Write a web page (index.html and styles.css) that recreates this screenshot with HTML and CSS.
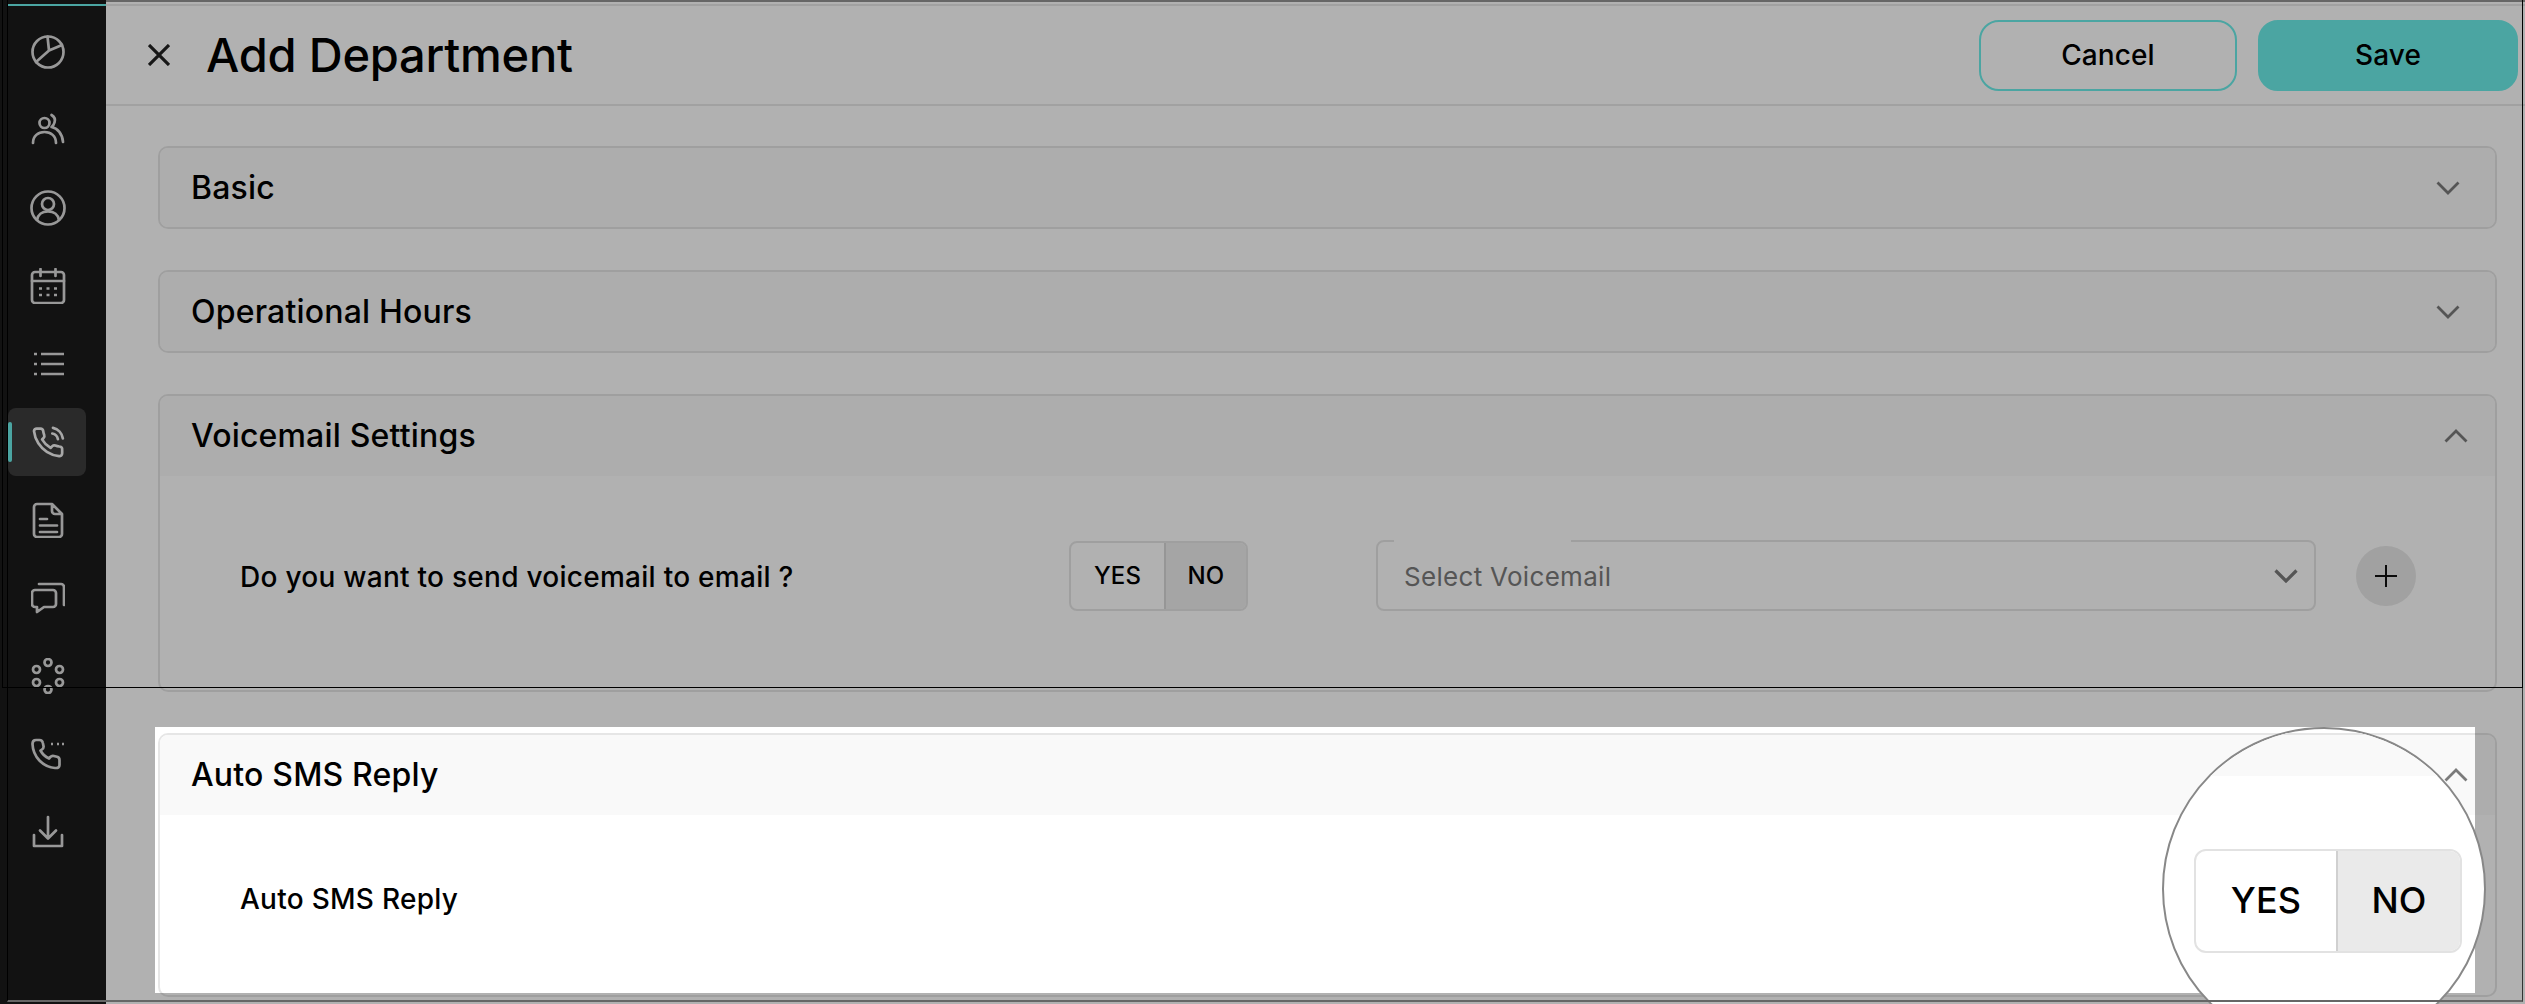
FILE: index.html
```html
<!DOCTYPE html>
<html lang="en">
<head>
<meta charset="utf-8">
<title>Add Department</title>
<link rel="stylesheet" href="styles.css">
</head>
<body>
<div class="app">
  <nav class="sidebar">
    <div class="side-accent"></div>
    <a class="nav-item"><svg class="ico" viewBox="0 0 34 34"><circle cx="17" cy="17" r="15.500"/><path d="M16.500 1.500L18 15.500 31 10M18 15.500L5 27"/></svg></a>
    <a class="nav-item"><svg class="ico" viewBox="0 0 34 34"><circle cx="13.500" cy="10" r="5"/><path d="M2 30c0-7 5-11 11.500-11S25 23 25 30M20.500 2c2.500 1.500 4 4.500 3 7.500-.5 2-1.500 3.500-3 4.500 6 1 11 7 11.500 15"/></svg></a>
    <a class="nav-item"><svg class="ico ico-lg" viewBox="0 0 36 36"><circle cx="18" cy="18" r="16.500"/><circle cx="18" cy="14" r="6"/><path d="M7 30c1-5.500 5-8.500 11-8.500S28 24.500 29 30"/></svg></a>
    <a class="nav-item"><svg class="ico ico-lg" viewBox="0 0 36 36"><rect x="2" y="4" width="32" height="31" rx="3"/><path d="M2 13h32M10.500 1v7M25.500 1v7"/><path class="dots" d="M9 20.500h3M16.500 20.500h3M24 20.500h3M9 27h3M16.500 27h3M24 27h3"/></svg></a>
    <a class="nav-item"><svg class="ico" viewBox="0 0 34 34"><path class="dots" d="M10 7h23M10 17h23M10 27h23M3 7h3M3 17h3M3 27h3"/></svg></a>
    <a class="nav-item nav-active"><span class="nav-mark"></span><svg class="ico ico-call" viewBox="0 0 24 24"><path d="M22 17.500v2.500a2 2 0 0 1-2.180 2 19.790 19.790 0 0 1-8.630-3.070 19.500 19.500 0 0 1-6-6 19.790 19.790 0 0 1-3.070-8.670A2 2 0 0 1 4.110 2.500h2.500a2 2 0 0 1 2 1.720c.127.960.361 1.903.700 2.810a2 2 0 0 1-.450 2.110L7.800 10.200a16 16 0 0 0 6 6l1.270-1.270a2 2 0 0 1 2.110-.450c.907.339 1.850.573 2.810.700A2 2 0 0 1 22 17.500zM15 6a5 5 0 0 1 4 4M15.500 2a9 9 0 0 1 7 7.500"/></svg></a>
    <a class="nav-item"><svg class="ico ico-lg" viewBox="0 0 36 36"><path d="M22 2H7a3 3 0 0 0-3 3v27a3 3 0 0 0 3 3h22a3 3 0 0 0 3-3V12L22 2zM22 2v7a3 3 0 0 0 3 3h7M10 17h7M10 23.500h17M10 30h17"/></svg></a>
    <a class="nav-item"><svg class="ico" viewBox="0 0 34 34"><path d="M4 9h18a3 3 0 0 1 3 3v11a3 3 0 0 1-3 3H13l-7 5v-5H4a3 3 0 0 1-3-3V12a3 3 0 0 1 3-3zM8 3h22a3 3 0 0 1 3 3v18"/></svg></a>
    <a class="nav-item"><svg class="ico ico-lg" viewBox="0 0 36 36"><circle cx="18" cy="4.500" r="3.500"/><circle cx="6.500" cy="11.500" r="3.500"/><circle cx="29.500" cy="11.500" r="3.500"/><circle cx="6.500" cy="24.500" r="3.500"/><circle cx="29.500" cy="24.500" r="3.500"/><circle cx="18" cy="31.500" r="3.500"/></svg></a>
    <a class="nav-item"><svg class="ico" viewBox="0 0 34 34"><path d="M24 31C12 30 2 20 1.500 7c0-2.500 1.500-4 3.500-4h3.500c1.800 0 3 1 3.300 2.700l.7 3.300c.3 1.500-.3 2.700-1.500 3.500l-1.500 1c2 3.800 4.700 6.300 8.500 8l1.300-1.500c1-1 2.200-1.300 3.500-1l3.200.8c1.700.4 2.500 1.500 2.500 3.200V28c0 2-1.500 3.200-4 3z"/><path class="dots" d="M20 7h2M26 7h2M31 7h2"/></svg></a>
    <a class="nav-item"><svg class="ico" viewBox="0 0 34 34"><path d="M17 2v21M9 15.500l8 8 8-8M3 20v11h28V20"/></svg></a>
  </nav>

  <main class="main">
    <header class="topbar">
      <svg class="close" viewBox="0 0 22 22"><path d="M1 1l20 20M21 1L1 21"/></svg>
      <h1 class="title">Add Department</h1>
      <div class="actions">
        <button class="btn btn-ghost">Cancel</button>
        <button class="btn btn-solid">Save</button>
      </div>
    </header>

    <div class="content">
      <section class="card">
        <div class="card-head"><h2 class="card-title">Basic</h2><svg class="chev" viewBox="0 0 24 14"><path d="M1.500 1.500L12 12 22.500 1.500"/></svg></div>
      </section>
      <section class="card">
        <div class="card-head"><h2 class="card-title">Operational Hours</h2><svg class="chev" viewBox="0 0 24 14"><path d="M1.500 1.500L12 12 22.500 1.500"/></svg></div>
      </section>
      <section class="card">
        <div class="card-head card-head-open"><h2 class="card-title">Voicemail Settings</h2><svg class="chev" viewBox="0 0 24 14"><path d="M1.500 12.500L12 2 22.500 12.500"/></svg></div>
        <div class="vm-row">
          <span class="field-label vm-label">Do you want to send voicemail to email ?</span>
          <div class="toggle">
            <span class="toggle-yes">YES</span><span class="toggle-no">NO</span>
          </div>
          <div class="select">
            <span class="select-notch"></span>
            <span class="select-text">Select Voicemail</span>
            <svg class="chev chev-select" viewBox="0 0 24 14"><path d="M1.500 1.500L12 12 22.500 1.500"/></svg>
          </div>
          <div class="add"><svg class="add-ico" viewBox="0 0 22 22"><path d="M11 0v22M0 11h22"/></svg></div>
        </div>
      </section>
      <section class="card">
        <div class="card-head card-head-open"><h2 class="card-title">Auto SMS Reply</h2><svg class="chev" viewBox="0 0 24 14"><path d="M1.500 12.500L12 2 22.500 12.500"/></svg></div>
        <div class="sms-row"><span class="field-label">Auto SMS Reply</span></div>
      </section>
    </div>
  </main>
</div>

<div class="spotlight"></div>

<div class="lens">
  <div class="lens-band"></div>
  <div class="lens-toggle">
    <span class="lens-yes">YES</span><span class="lens-no">NO</span>
  </div>
</div>

<div class="frame-outer"></div>
<div class="frame-inner"></div>
</body>
</html>
```

FILE: styles.css
```css
* { box-sizing: border-box; }
html, body { margin: 0; padding: 0; }
body {
  position: relative;
  width: 2525px;
  height: 1004px;
  overflow: hidden;
  background: #fff;
  color: #000;
  font-family: Inter, "Liberation Sans", sans-serif;
}
.app { display: flex; height: 1004px; }

.sidebar {
  width: 106px;
  flex: none;
  background: #1b1a1b;
  display: flex;
  flex-direction: column;
  align-items: flex-start;
  gap: 10px;
}
.side-accent {
  width: 98px;
  height: 2px;
  margin: 4px 0 2px 8px;
  background: #6ceee9;
}
.nav-item {
  position: relative;
  width: 78px;
  height: 68px;
  margin-left: 8px;
  padding-left: 2px;
  flex: none;
  display: flex;
  align-items: center;
  justify-content: center;
  border-radius: 8px;
}
.nav-active { background: #3d3d3d; }
.nav-mark {
  position: absolute;
  left: 0;
  top: 14px;
  width: 4px;
  height: 40px;
  border-radius: 2px;
  background: #6ceee9;
}
.ico {
  width: 34px;
  height: 34px;
  fill: none;
  stroke: #dcdcdc;
  stroke-width: 2.7;
  stroke-linecap: round;
  stroke-linejoin: round;
}
.ico-lg { width: 36px; height: 36px; }
.ico-call { stroke-width: 1.9; stroke: #f2f2f2; }
.dots { stroke-width: 2.7; stroke-linecap: butt; }

.main { flex: 1; min-width: 0; border-top: 2px solid #939393; }
.topbar {
  height: 102px;
  margin-top: 2px;
  border-top: 2px solid #e8e8e8;
  border-bottom: 2px solid #e8e8e8;
  display: flex;
  align-items: center;
  padding: 0 7px 0 42px;
}
.close {
  width: 22px;
  height: 22px;
  flex: none;
  fill: none;
  stroke: #222;
  stroke-width: 3.2;
}
.title {
  margin: 0 0 0 36px;
  font-size: 47px;
  font-weight: 450;
  line-height: 60px;
  letter-spacing: -0.22px;
}
.actions { margin-left: auto; display: flex; gap: 21px; }
.btn {
  height: 71px;
  border-radius: 20px;
  font: 450 28px Inter, "Liberation Sans", sans-serif;
  letter-spacing: 0.1px;
  color: #000;
}
.btn-ghost { width: 258px; background: transparent; border: 2px solid #6ceee9; }
.btn-solid { width: 260px; background: #6ceee9; border: 2px solid #6ceee9; }

.content {
  padding: 40px 28px 0 52px;
  display: flex;
  flex-direction: column;
  gap: 41px;
}
.card { border: 2px solid #e6e6e6; border-radius: 10px; overflow: hidden; background: #fff; }
.card-head {
  height: 79px;
  padding: 0 35px 0 31px;
  background: #f9f9f9;
  display: flex;
  align-items: center;
  justify-content: space-between;
}
.card-head-open { height: 80px; padding-right: 27px; }
.card-title { margin: 0; font-size: 32px; font-weight: 450; line-height: 40px; letter-spacing: 0.18px; }
.chev {
  width: 24px;
  height: 14px;
  flex: none;
  fill: none;
  stroke: #7b7b7b;
  stroke-width: 2.8;
}
.field-label { font-size: 28px; font-weight: 450; line-height: 40px; letter-spacing: 0.27px; }

.vm-row {
  display: flex;
  align-items: center;
  padding: 64px 0 79px 80px;
}
.vm-label { width: 829px; flex: none; padding-top: 2px; }
.toggle {
  width: 179px;
  height: 70px;
  flex: none;
  display: flex;
  border: 2px solid #e6e6e6;
  border-radius: 8px;
  overflow: hidden;
  font-size: 24px;
  font-weight: 450;
  letter-spacing: 0.1px;
}
.toggle-yes, .toggle-no { display: flex; align-items: center; justify-content: center; }
.toggle-yes { width: 93px; }
.toggle-no { flex: 1; background: #eeeeee; border-left: 2px solid #d8d8d8; }
.select {
  position: relative;
  width: 940px;
  height: 71px;
  margin-left: 128px;
  flex: none;
  display: flex;
  align-items: center;
  justify-content: space-between;
  padding: 0 16px 0 26px;
  border: 2px solid #e6e6e6;
  border-radius: 8px;
}
.select-notch {
  position: absolute;
  left: 16px;
  top: -2px;
  width: 177px;
  height: 2px;
  background: #fff;
}
.select-text { font-size: 26px; color: #7b7b7b; letter-spacing: 0.3px; padding-top: 2px; }
.chev-select { stroke-width: 3.2; }
.add {
  width: 60px;
  height: 60px;
  margin-left: 40px;
  flex: none;
  border-radius: 50%;
  background: #e8e8e8;
  display: flex;
  align-items: center;
  justify-content: center;
}
.add-ico { width: 22px; height: 22px; fill: none; stroke: #111; stroke-width: 2; }

.sms-row { height: 180px; padding: 64px 0 0 80px; }

.spotlight {
  position: absolute;
  left: 155px;
  top: 727px;
  width: 2320px;
  height: 266px;
  box-shadow: 0 0 0 4000px rgba(0, 0, 0, 0.306);
  pointer-events: none;
}

.lens {
  position: absolute;
  left: 2162px;
  top: 727px;
  width: 324px;
  height: 324px;
  border: 2px solid #888;
  border-radius: 50%;
  overflow: hidden;
  background: #fff;
}
.lens-band {
  height: 43px;
  margin-top: 4px;
  background: #f9f9f9;
  border-top: 2px solid #e6e6e6;
}
.lens-toggle {
  width: 268px;
  height: 104px;
  margin: 73px 0 0 30px;
  display: flex;
  border: 2px solid #e2e2e2;
  border-radius: 12px;
  overflow: hidden;
  font-size: 36px;
  font-weight: 450;
  letter-spacing: 0.1px;
}
.lens-yes, .lens-no { display: flex; align-items: center; justify-content: center; padding-bottom: 2px; }
.lens-yes { width: 140px; }
.lens-no { flex: 1; background: #eaeaea; border-left: 2px solid #d0d0d0; }

.frame-outer {
  position: absolute;
  left: 7px;
  top: 0;
  width: 2516px;
  height: 1002px;
  border-left: 1px solid #000;
  border-right: 1px solid #333;
  border-bottom: 2px solid #666;
  pointer-events: none;
}
.frame-inner {
  position: absolute;
  left: 2px;
  top: 0;
  width: 2521px;
  height: 688px;
  border-left: 1px solid #000;
  border-right: 1px solid #000;
  border-bottom: 1px solid #000;
  pointer-events: none;
}
```
